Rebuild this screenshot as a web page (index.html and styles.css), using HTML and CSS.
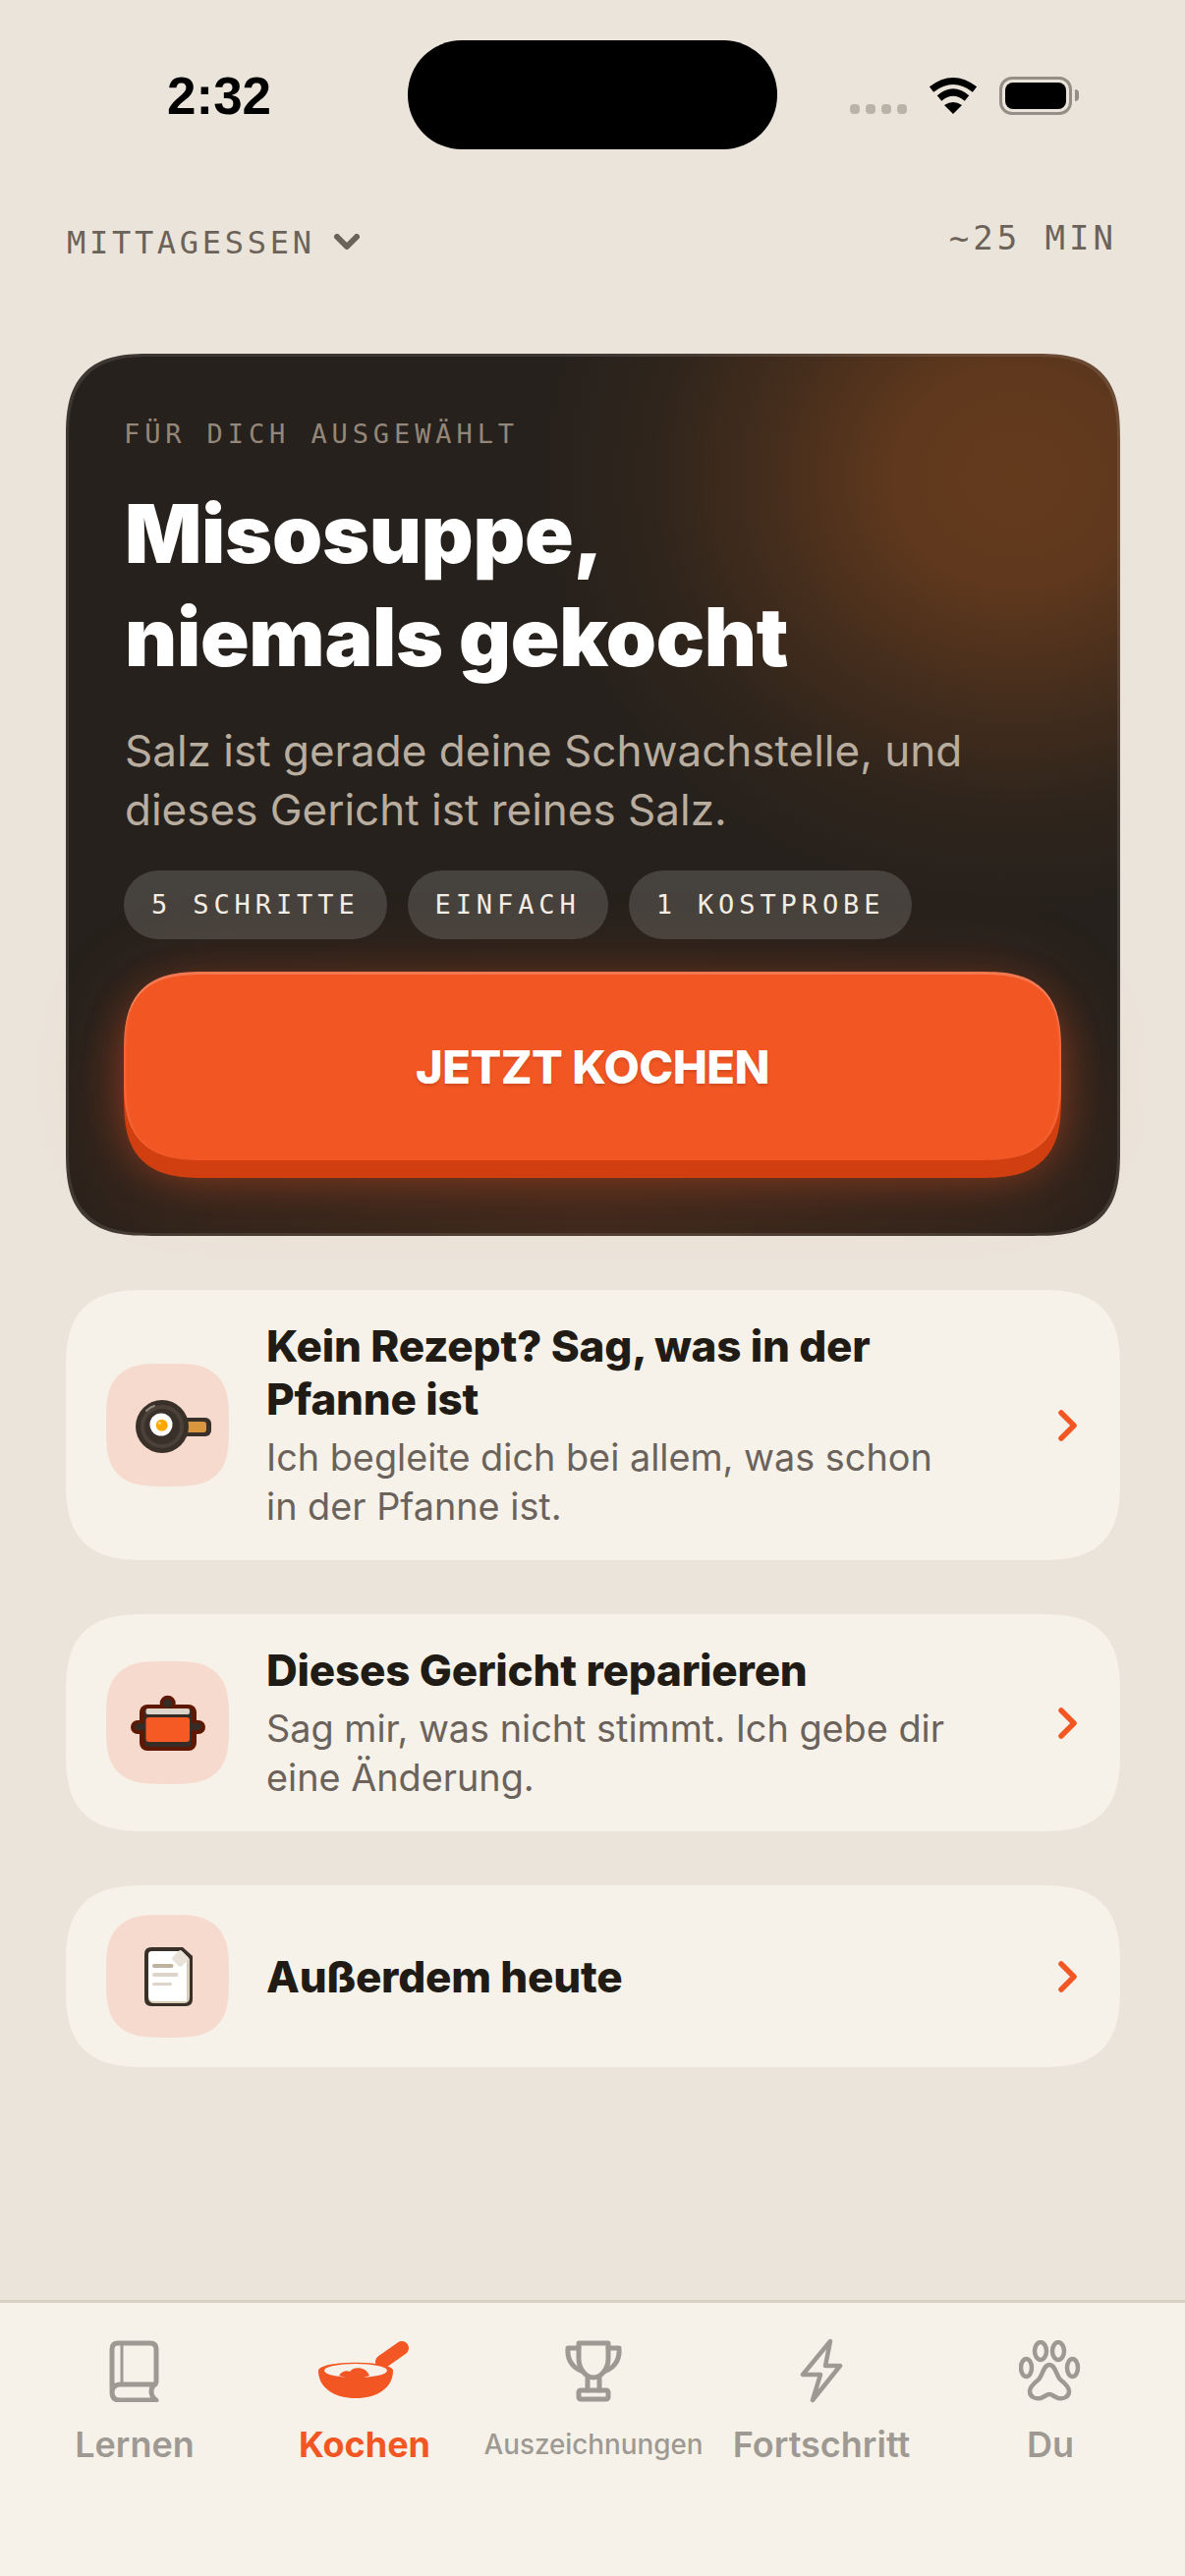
FILE: index.html
```html
<!DOCTYPE html>
<html lang="de">
<head>
<meta charset="utf-8">
<title>Kochen</title>
<link rel="stylesheet" href="styles.css">
</head>
<body>
<div class="screen">
  <header class="status">
    <span class="time">2:32</span>
    <div class="island"></div>
    <div class="status-icons">
      <div class="dots"><i></i><i></i><i></i><i></i></div>
      <svg class="wifi" width="52" height="40" viewBox="0 0 52 40">
        <path d="M4 14 Q26 -3 48 14" fill="none" stroke="#000" stroke-width="7"/>
        <path d="M12 23 Q26 11 40 23" fill="none" stroke="#000" stroke-width="7"/>
        <path d="M17 30 Q26 24 35 30 L26 39Z" fill="#000"/>
      </svg>
      <div class="battery"><div class="battery-fill"></div></div>
      <div class="battery-nub"></div>
    </div>
  </header>

  <div class="meta">
    <div class="meal">
      <span>MITTAGESSEN</span>
      <svg width="26" height="18" viewBox="0 0 26 18"><path d="M3 3 L13 13 L23 3" fill="none" stroke="#6b6359" stroke-width="6" stroke-linecap="round" stroke-linejoin="round"/></svg>
    </div>
    <span class="duration">~25 MIN</span>
  </div>

  <section class="hero">
    <p class="eyebrow">FÜR DICH AUSGEWÄHLT</p>
    <h1 class="hero-title">Misosuppe,<br>niemals gekocht</h1>
    <p class="hero-text">Salz ist gerade deine Schwachstelle, und<br>dieses Gericht ist reines Salz.</p>
    <div class="chips">
      <span class="chip">5 SCHRITTE</span>
      <span class="chip">EINFACH</span>
      <span class="chip">1 KOSTPROBE</span>
    </div>
    <button class="cta">JETZT KOCHEN</button>
  </section>

  <div class="rows">
    <a class="row">
      <div class="tile">
        <svg width="125" height="125" viewBox="0 0 125 125">
          <rect x="76" y="55" width="31" height="19" rx="6" fill="#3a302a"/>
          <rect x="80" y="59" width="22" height="11" rx="3" fill="#d9963c"/>
          <circle cx="57" cy="64" r="27" fill="#3a302a"/>
          <circle cx="57" cy="64" r="20" fill="none" stroke="#4c4139" stroke-width="4"/>
          <path d="M41 48 Q45 44 49 43" fill="none" stroke="#8f867d" stroke-width="2" stroke-linecap="round"/>
          <circle cx="56" cy="62" r="11.5" fill="#fff"/>
          <circle cx="56.7" cy="62.7" r="6" fill="#ffa800"/>
          <circle cx="54.5" cy="60.5" r="1.3" fill="#ffe3a0"/>
        </svg>
      </div>
      <div class="row-text">
        <h2 class="row-title">Kein Rezept? Sag, was in der<br>Pfanne ist</h2>
        <p class="row-sub">Ich begleite dich bei allem, was schon<br>in der Pfanne ist.</p>
      </div>
      <svg class="chev" width="22" height="34" viewBox="0 0 22 34"><path d="M4 4 L17 17 L4 30" fill="none" stroke="#f25623" stroke-width="5.5" stroke-linecap="round" stroke-linejoin="round"/></svg>
    </a>
    <a class="row">
      <div class="tile">
        <svg width="125" height="125" viewBox="0 0 125 125">
          <circle cx="62.7" cy="42.7" r="8" fill="#5e1700"/>
          <rect x="25" y="60" width="76" height="14" rx="7" fill="#5e1700"/>
          <rect x="34" y="44" width="58" height="47" rx="8" fill="#5e1700"/>
          <circle cx="62.7" cy="42.7" r="4.5" fill="#352c28"/>
          <rect x="29" y="63" width="68" height="7" rx="3.5" fill="#352c28"/>
          <rect x="39" y="48" width="48" height="39" rx="4" fill="#352c28"/>
          <rect x="40.5" y="48" width="44.5" height="6" rx="2" fill="#ddd5c9"/>
          <rect x="40.5" y="57" width="44.5" height="25" rx="3" fill="#f55a24"/>
        </svg>
      </div>
      <div class="row-text">
        <h2 class="row-title">Dieses Gericht reparieren</h2>
        <p class="row-sub">Sag mir, was nicht stimmt. Ich gebe dir<br>eine Änderung.</p>
      </div>
      <svg class="chev" width="22" height="34" viewBox="0 0 22 34"><path d="M4 4 L17 17 L4 30" fill="none" stroke="#f25623" stroke-width="5.5" stroke-linecap="round" stroke-linejoin="round"/></svg>
    </a>
    <a class="row">
      <div class="tile">
        <svg width="125" height="125" viewBox="0 0 125 125">
          <path d="M46 33 H78 L88 42 V86 Q88 93 81 93 H46 Q39 93 39 86 V40 Q39 33 46 33Z" fill="#3a302a"/>
          <path d="M47 37 H77 L85 45 V84 Q85 90 79 90 H49 Q43 90 43 84 V41 Q43 37 47 37Z" fill="#d9cdb8"/>
          <path d="M47 37 H76 L82 44 V88 H49 Q43 88 43 82 V41 Q43 37 47 37Z" fill="#fff"/>
          <rect x="69" y="38" width="13" height="13" rx="2" transform="rotate(45 75.5 44.5)" fill="#e8e2d8"/>
          <rect x="47" y="50" width="21.5" height="4" rx="2" fill="#bfb29f"/>
          <rect x="47" y="59" width="26.5" height="4" rx="2" fill="#ddd5c9"/>
          <rect x="47" y="69" width="20" height="3" rx="1.5" fill="#ddd5c9"/>
        </svg>
      </div>
      <div class="row-text">
        <h2 class="row-title">Außerdem heute</h2>
      </div>
      <svg class="chev" width="22" height="34" viewBox="0 0 22 34"><path d="M4 4 L17 17 L4 30" fill="none" stroke="#f25623" stroke-width="5.5" stroke-linecap="round" stroke-linejoin="round"/></svg>
    </a>
  </div>

  <nav class="tabbar">
    <a class="tab">
      <div class="tab-icon">
        <svg width="52" height="64" viewBox="0 0 52 64" fill="none" stroke="#9e9a93" stroke-width="5" stroke-linecap="round" stroke-linejoin="round">
          <path d="M3 50 V10 Q3 4 9 4 H42 Q48 4 48 10 V43 Q48 45 46 46 H12 Q3 46 3 54 Q3 62 11 62 H48 Q44 60 43 54 Q43 48 47 46"/>
          <path d="M13 5 V44" stroke-width="3"/>
        </svg>
      </div>
      <span class="tab-label">Lernen</span>
    </a>
    <a class="tab tab-active">
      <div class="tab-icon">
        <svg width="96" height="60" viewBox="0 0 96 60">
          <path d="M66 21 L86 7" fill="none" stroke="#f25623" stroke-width="14" stroke-linecap="round"/>
          <path d="M1 30 C1 19 77 19 77 30 C77 48 60 58 39 58 C18 58 1 48 1 30Z" fill="#f25623"/>
          <ellipse cx="39" cy="30" rx="32" ry="7" fill="#f6f2ea"/>
          <path d="M22 35 C24 31 30 29 33 31 C36 26 49 25 53 35 L39 40Z" fill="#f25623"/>
        </svg>
      </div>
      <span class="tab-label">Kochen</span>
    </a>
    <a class="tab">
      <div class="tab-icon">
        <svg width="60" height="64" viewBox="0 0 60 64" fill="none" stroke="#9e9a93" stroke-width="5" stroke-linecap="round" stroke-linejoin="round">
          <path d="M15 4 H45 V20 C45 31 37 39 30 39 C23 39 15 31 15 20Z"/>
          <path d="M15 9 H4 C3 21 9 29 19 33"/>
          <path d="M45 9 H56 C57 21 51 29 41 33"/>
          <path d="M24 39 V52 M36 39 V52"/>
          <rect x="15" y="52" width="30" height="9" rx="2"/>
        </svg>
      </div>
      <span class="tab-label tab-label-small">Auszeichnungen</span>
    </a>
    <a class="tab">
      <div class="tab-icon">
        <svg width="44" height="66" viewBox="0 0 44 66" fill="none" stroke="#9e9a93" stroke-width="4.5" stroke-linecap="round" stroke-linejoin="round">
          <path d="M31 3 L3 37 H21 L13 63 L41 28 H26Z"/>
        </svg>
      </div>
      <span class="tab-label">Fortschritt</span>
    </a>
    <a class="tab">
      <div class="tab-icon">
        <svg width="64" height="62" viewBox="0 0 64 62" fill="none" stroke="#9e9a93" stroke-width="4.5" stroke-linecap="round" stroke-linejoin="round">
          <ellipse cx="22" cy="11" rx="6" ry="9"/>
          <ellipse cx="40" cy="11" rx="6" ry="9"/>
          <ellipse cx="7.5" cy="28" rx="5.5" ry="9"/>
          <ellipse cx="54.5" cy="28" rx="5.5" ry="9"/>
          <path d="M31 25 C25 25 24 36 20 40 C15 44 11 48 11 52 C11 58 17 60 22 59 C26 58 28 55 31 55 C34 55 36 58 40 59 C45 60 51 58 51 52 C51 48 47 44 42 40 C38 36 37 25 31 25Z"/>
        </svg>
      </div>
      <span class="tab-label">Du</span>
    </a>
  </nav>
</div>
</body>
</html>
```

FILE: styles.css
```css
* { box-sizing: border-box; margin: 0; padding: 0; }

html, body { background: #ebe4da; }

.screen {
  width: 1206px;
  height: 2622px;
  display: flex;
  flex-direction: column;
  font-family: "Inter", "Liberation Sans", sans-serif;
  overflow: hidden;
}

/* status bar */
.status {
  display: flex;
  align-items: flex-start;
  padding: 41px 0 0 170px;
  height: 152px;
}
.time {
  width: 245px;
  margin-top: 27px;
  font: 700 53px/60px "Liberation Sans", sans-serif;
  color: #000;
}
.island {
  width: 376px;
  height: 111px;
  border-radius: 55px;
  background: #000;
}
.status-icons {
  display: flex;
  align-items: center;
  margin: 36px 0 0 74px;
  height: 40px;
}
.dots { display: flex; gap: 6px; align-self: flex-end; margin-bottom: 1px; }
.dots i { width: 10px; height: 10px; border-radius: 4px; background: #bab4a8; }
.wifi { margin-left: 21px; }
.battery {
  width: 74px;
  height: 39px;
  margin-left: 21px;
  padding: 3px;
  border: 3px solid #948f86;
  border-radius: 13px;
}
.battery-fill { width: 100%; height: 100%; border-radius: 8px; background: #000; }
.battery-nub { width: 4px; height: 12px; margin-left: 3px; border-radius: 0 6px 6px 0; background: #948f86; }

/* meal line */
.meta {
  display: flex;
  justify-content: space-between;
  align-items: flex-start;
  padding: 75px 69px 0 68px;
  height: 208px;
}
.meal {
  display: flex;
  align-items: center;
  gap: 19px;
  font: 400 32px/40px "DejaVu Sans Mono", monospace;
  letter-spacing: 3.7px;
  color: #6b6359;
}
.duration {
  margin-top: -5px;
  font: 400 34px/40px "DejaVu Sans Mono", monospace;
  letter-spacing: 4px;
  color: #6b6359;
}

/* hero card */
.hero {
  width: 1073px;
  margin-left: 67px;
  padding: 65px 60px 77px 59px;
  border-radius: 66px;
  background:
    radial-gradient(ellipse 700px 320px at 50% 100%, rgba(120, 60, 30, 0.3), rgba(120, 60, 30, 0) 100%),
    radial-gradient(ellipse 620px 560px at 90% 14%, #643a1d 0%, rgba(100, 58, 29, 0.92) 20%, rgba(100, 58, 29, 0.5) 40%, rgba(100, 58, 29, 0.15) 60%, rgba(100, 58, 29, 0) 80%),
    #26211c;
  box-shadow: inset 0 0 0 3px rgba(255, 255, 255, 0.1);
}
.eyebrow {
  font: 400 27px/34px "DejaVu Sans Mono", monospace;
  letter-spacing: 4.9px;
  color: #94877a;
}
.hero-title {
  margin-top: 32px;
  padding-left: 1px;
  font-size: 82px;
  line-height: 105px;
  font-weight: 900;
  letter-spacing: -0.3px;
  color: #fff;
}
.hero-text {
  margin-top: 33px;
  padding-left: 1px;
  font-size: 44px;
  line-height: 60px;
  font-weight: 400;
  color: #b8ad9f;
}
.chips { display: flex; gap: 21px; margin-top: 32px; }
.chip {
  height: 70px;
  padding: 0 28px;
  border-radius: 35px;
  background: rgba(255, 255, 255, 0.15);
  font: 400 27px/70px "DejaVu Sans Mono", monospace;
  letter-spacing: 4.9px;
  color: #f3ede4;
}
.cta {
  display: block;
  width: 954px;
  height: 192px;
  margin-top: 33px;
  border: 0;
  border-radius: 62px;
  background: #f25623;
  box-shadow:
    inset 0 3px 0 rgba(255, 255, 255, 0.2),
    inset 3px 0 2px -1px rgba(255, 255, 255, 0.12),
    inset -3px 0 2px -1px rgba(255, 255, 255, 0.12),
    0 18px 0 #d13f11,
    0 16px 40px rgba(242, 86, 35, 0.38),
    0 10px 90px rgba(242, 86, 35, 0.22);
  font-family: "Inter", sans-serif;
  font-size: 47px;
  font-weight: 800;
  letter-spacing: -0.5px;
  color: #fff;
  text-shadow: 0 2px 3px rgba(0, 0, 0, 0.15);
}

/* list rows */
.rows {
  display: flex;
  flex-direction: column;
  gap: 55px;
  width: 1073px;
  margin: 55px 0 0 67px;
}
.row {
  display: flex;
  align-items: center;
  padding: 30px 41px;
  border-radius: 62px;
  background: #f6f2ea;
}
.tile {
  flex: none;
  width: 125px;
  height: 125px;
  border-radius: 42px;
  background: #f6dacd;
}
.tile svg { display: block; }
.row-text { flex: 1; margin-left: 38px; display: flex; flex-direction: column; gap: 7px; }
.row-title {
  font-size: 44px;
  line-height: 54px;
  font-weight: 800;
  letter-spacing: -0.2px;
  color: #211b16;
}
.row-sub {
  font-size: 37.8px;
  line-height: 50px;
  font-weight: 400;
  color: #6b635b;
}
.chev { flex: none; margin-right: 1px; }

/* bottom navigation */
.tabbar {
  display: grid;
  grid-template-columns: 234px 234px 232px 232px 1fr;
  margin-top: auto;
  height: 281px;
  padding: 0 20px;
  border-top: 3px solid #d8d0c3;
  background: #f6f2ea;
}
.tab {
  display: flex;
  flex-direction: column;
  align-items: center;
  padding-top: 33px;
}
.tab-icon { height: 72px; display: flex; align-items: center; justify-content: center; }
.tab-label {
  margin-top: 17px;
  font-size: 36px;
  line-height: 44px;
  font-weight: 600;
  color: #9e9a93;
  white-space: nowrap;
}
.tab-label-small { font-size: 27.8px; font-weight: 500; }
.tab-active .tab-label { font-weight: 700; color: #f25623; }

/* continuous corners where the engine can draw them */
@supports (corner-shape: squircle) {
  .hero { border-radius: 88px; corner-shape: superellipse(1.5); }
  .cta { border-radius: 84px; corner-shape: superellipse(1.5); }
  .row { border-radius: 84px; corner-shape: superellipse(1.5); }
  .tile { border-radius: 56px; corner-shape: superellipse(1.5); }
}
```
